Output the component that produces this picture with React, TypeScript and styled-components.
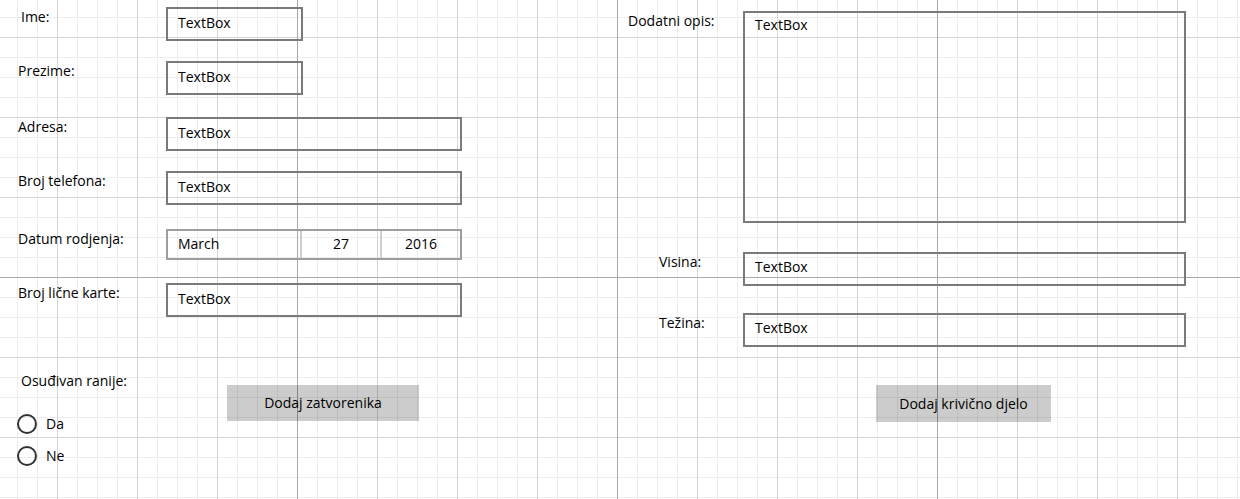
import styled, { createGlobalStyle } from "styled-components"

const GlobalStyle = createGlobalStyle`
	html, body {
		margin: 0;
		padding: 0;
	}
	body {
		font-family: "Open Sans", "Noto Sans", sans-serif;
		font-size: 14px;
		color: #000;
	}
`

// designer grid: minor 20px, medium 80px, major 320px
const Canvas = styled.div`
	width: 1240px;
	height: 499px;
	overflow: hidden;
	display: flex;
	background-color: #fff;
	background-image:
		linear-gradient(to right, #a9a9a9 1px, transparent 1px),
		linear-gradient(to bottom, #a9a9a9 1px, transparent 1px),
		linear-gradient(to right, #d6d6d6 1px, transparent 1px),
		linear-gradient(to bottom, #d6d6d6 1px, transparent 1px),
		linear-gradient(to right, #ededed 1px, transparent 1px),
		linear-gradient(to bottom, #ededed 1px, transparent 1px);
	background-size:
		320px 100%,
		100% 320px,
		80px 100%,
		100% 80px,
		20px 100%,
		100% 20px;
	background-position:
		297px 0,
		0 277px,
		57px 0,
		0 37px,
		17px 0,
		0 17px;
`

const Panel = styled.div<{ $width?: number }>`
	display: flex;
	flex-direction: column;
	${(p) => (p.$width ? `width: ${p.$width}px;` : "flex: 1;")}
`

const Row = styled.div<{ $gap: number; $labelWidth: number }>`
	display: grid;
	grid-template-columns: ${(p) => p.$labelWidth}px auto;
	align-items: start;
	margin-top: ${(p) => p.$gap}px;
`

const Label = styled.div<{ $indent: number }>`
	padding-left: ${(p) => p.$indent}px;
	line-height: 20px;
	white-space: nowrap;
`

const TextBox = styled.div<{ $width: number; $height?: number; $top?: number }>`
	box-sizing: border-box;
	width: ${(p) => p.$width}px;
	height: ${(p) => p.$height ?? 34}px;
	border: 2px solid #7a7a7a;
	padding: ${(p) => p.$top ?? 4}px 10px 0;
	line-height: 20px;
`

const DatePicker = styled.div`
	box-sizing: border-box;
	display: flex;
	width: 296px;
	height: 31px;
	border: 2px solid #9d9d9d;
	line-height: 20px;
`

const DatePart = styled.div<{ $width?: number; $align?: string; $first?: boolean }>`
	box-sizing: border-box;
	${(p) => (p.$width ? `width: ${p.$width}px;` : "flex: 1;")}
	padding: 3px ${(p) => (p.$first ? "10px" : "0")} 0;
	text-align: ${(p) => p.$align ?? "center"};
	${(p) => (p.$first ? "" : "border-left: 2px solid #cfcfcf;")}
`

const BottomRow = styled.div<{ $gap: number }>`
	display: flex;
	align-items: flex-start;
	margin-top: ${(p) => p.$gap}px;
`

const RadioGroup = styled.div`
	width: 227px;
	display: flex;
	flex-direction: column;
`

const RadioItem = styled.label<{ $first?: boolean }>`
	display: flex;
	align-items: center;
	gap: 9px;
	height: 32px;
	padding-left: 17px;
	margin-top: ${(p) => (p.$first ? "17px" : "0")};
	line-height: 20px;
`

const RadioCircle = styled.span`
	box-sizing: border-box;
	width: 20px;
	height: 20px;
	border: 2px solid #333;
	border-radius: 50%;
`

const Button = styled.div<{ $width: number; $height: number; $top?: number }>`
	box-sizing: border-box;
	display: flex;
	align-items: center;
	justify-content: center;
	width: ${(p) => p.$width}px;
	height: ${(p) => p.$height}px;
	margin-top: ${(p) => p.$top ?? 0}px;
	background: rgba(0, 0, 0, 0.2);
	line-height: 20px;
	white-space: nowrap;
`

const ButtonRow = styled.div<{ $gap: number }>`
	display: flex;
	margin-top: ${(p) => p.$gap}px;
	padding-left: 259px;
`

export default function App() {
	return (
		<>
			<GlobalStyle />
			<Canvas>
				<Panel $width={617}>
					<Row $gap={7} $labelWidth={166}>
						<Label $indent={21}>Ime:</Label>
						<TextBox $width={137}>TextBox</TextBox>
					</Row>
					<Row $gap={20} $labelWidth={166}>
						<Label $indent={18}>Prezime:</Label>
						<TextBox $width={137}>TextBox</TextBox>
					</Row>
					<Row $gap={22} $labelWidth={166}>
						<Label $indent={18}>Adresa:</Label>
						<TextBox $width={296}>TextBox</TextBox>
					</Row>
					<Row $gap={20} $labelWidth={166}>
						<Label $indent={18}>Broj telefona:</Label>
						<TextBox $width={296}>TextBox</TextBox>
					</Row>
					<Row $gap={24} $labelWidth={166}>
						<Label $indent={18}>Datum rodjenja:</Label>
						<DatePicker>
							<DatePart $width={132} $align="left" $first>
								March
							</DatePart>
							<DatePart $width={80}>27</DatePart>
							<DatePart>2016</DatePart>
						</DatePicker>
					</Row>
					<Row $gap={23} $labelWidth={166}>
						<Label $indent={18}>Broj lične karte:</Label>
						<TextBox $width={296}>TextBox</TextBox>
					</Row>
					<BottomRow $gap={54}>
						<RadioGroup>
							<Label $indent={21}>Osuđivan ranije:</Label>
							<RadioItem $first>
								<RadioCircle />
								Da
							</RadioItem>
							<RadioItem>
								<RadioCircle />
								Ne
							</RadioItem>
						</RadioGroup>
						<Button $width={192} $height={36} $top={14}>
							Dodaj zatvorenika
						</Button>
					</BottomRow>
				</Panel>

				<Panel>
					<Row $gap={11} $labelWidth={126}>
						<Label $indent={11}>Dodatni opis:</Label>
						<TextBox $width={443} $height={212} $top={2}>
							TextBox
						</TextBox>
					</Row>
					<Row $gap={29} $labelWidth={126}>
						<Label $indent={42}>Visina:</Label>
						<TextBox $width={443} $top={3}>TextBox</TextBox>
					</Row>
					<Row $gap={27} $labelWidth={126}>
						<Label $indent={42}>Težina:</Label>
						<TextBox $width={443} $top={3}>TextBox</TextBox>
					</Row>
					<ButtonRow $gap={38}>
						<Button $width={175} $height={37}>
							Dodaj krivično djelo
						</Button>
					</ButtonRow>
				</Panel>
			</Canvas>
		</>
	)
}
